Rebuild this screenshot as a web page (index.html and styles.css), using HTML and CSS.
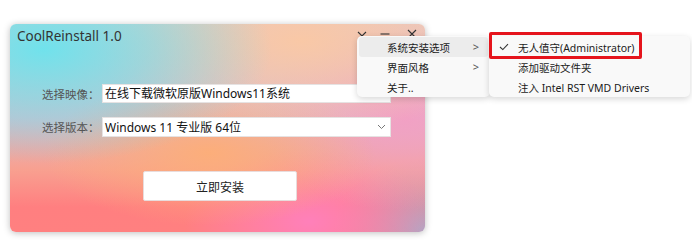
FILE: index.html
```html
<!DOCTYPE html>
<html lang="zh-CN">
<head>
  <meta charset="UTF-8">
  <title>CoolReinstall 1.0</title>
  <link rel="stylesheet" href="styles.css">
</head>
<body>
  <div class="window">
    <div class="titlebar">
      <span class="title">CoolReinstall 1.0</span>
      <div class="winbtns">
        <svg class="wb wb-menu" width="10" height="10" viewBox="0 0 10 10"><path d="M1 3 L5 7 L9 3" fill="none" stroke="#333" stroke-width="1.1"/></svg>
        <svg class="wb wb-min" width="10" height="10" viewBox="0 0 10 10"><path d="M0.5 5 H9.5" stroke="#333" stroke-width="1.1"/></svg>
        <svg class="wb wb-close" width="10" height="10" viewBox="0 0 10 10"><path d="M1 1 L9 9 M9 1 L1 9" stroke="#333" stroke-width="1.1"/></svg>
      </div>
    </div>
    <div class="form">
      <div class="row">
        <span class="label">选择映像：</span>
        <div class="field">在线下载微软原版Windows11系统</div>
      </div>
      <div class="row">
        <span class="label">选择版本：</span>
        <div class="field select">
          <span>Windows 11 专业版 64位</span>
          <svg width="9" height="6" viewBox="0 0 9 6"><path d="M1 1 L4.5 4.5 L8 1" fill="none" stroke="#777" stroke-width="1"/></svg>
        </div>
      </div>
    </div>
    <div class="actions">
      <button class="install">立即安装</button>
    </div>
  </div>

  <div class="menu menu-main">
    <div class="item active"><span>系统安装选项</span><span class="arrow">&gt;</span></div>
    <div class="item"><span>界面风格</span><span class="arrow">&gt;</span></div>
    <div class="item"><span>关于..</span></div>
  </div>

  <div class="menu menu-sub">
    <div class="item"><svg class="check" width="10" height="8" viewBox="0 0 10 8"><path d="M1 4 L3.8 6.6 L9 1.2" fill="none" stroke="#333" stroke-width="1.1"/></svg><span>无人值守(Administrator)</span></div>
    <div class="item"><span>添加驱动文件夹</span></div>
    <div class="item"><span>注入 Intel RST VMD Drivers</span></div>
  </div>

  <div class="highlight-box"></div>
</body>
</html>
```

FILE: styles.css
```css
body { margin: 0; background: #fff; font-family: "Noto Sans", "Noto Sans CJK SC", sans-serif; color: #1b1b1b; position: relative; width: 692px; height: 240px; overflow: hidden; }

.window {
  margin: 24px 0 0 10px;
  width: 415px;
  height: 208px;
  box-sizing: border-box;
  border-radius: 6px;
  box-shadow: 0 1px 7px rgba(0, 0, 0, 0.26);
  background:
    radial-gradient(ellipse 55% 55% at 8% 12%, rgba(112, 226, 236, 1) 0%, rgba(112, 226, 236, 0.6) 45%, rgba(112, 226, 236, 0) 100%),
    radial-gradient(ellipse 50% 45% at 70% 8%, rgba(249, 200, 166, 1) 0%, rgba(249, 200, 166, 0) 100%),
    radial-gradient(ellipse 40% 35% at 48% 62%, rgba(252, 174, 122, 1) 0%, rgba(252, 174, 122, 0) 100%),
    radial-gradient(ellipse 35% 45% at 95% 45%, rgba(242, 160, 196, 1) 0%, rgba(242, 160, 196, 0) 100%),
    radial-gradient(ellipse 30% 35% at 72% 95%, rgba(255, 128, 186, 1) 0%, rgba(255, 128, 186, 0) 100%),
    radial-gradient(ellipse 22% 35% at 100% 100%, rgba(176, 166, 196, 1) 0%, rgba(176, 166, 196, 0) 100%),
    linear-gradient(180deg, #e6c6c4 0%, #dcb8c8 45%, #f8a090 70%, #ff7f80 88%, #ff8080 100%);
}

.titlebar { display: flex; align-items: flex-start; justify-content: space-between; height: 24px; padding: 4px 0 0 7px; box-sizing: border-box; }
.title { font-size: 13.5px; color: #333; line-height: 16px; }
.winbtns { display: flex; align-items: center; padding: 1px 8px 0 0; }
.wb { display: block; }
.wb-min { margin-left: 13px; }
.wb-close { margin-left: 17px; }

.form { display: flex; flex-direction: column; gap: 14px; padding: 36px 0 0 32px; }
.row { display: flex; align-items: center; gap: 5px; }
.label { width: 55px; font-size: 11.5px; color: #555; white-space: nowrap; text-align: right; }
.field { width: 289px; height: 19px; box-sizing: border-box; background: #fff; border: 1px solid #e6e2e2; font-size: 12px; line-height: 17px; padding-left: 2px; white-space: nowrap; color: #111; }
.select { display: flex; align-items: center; justify-content: space-between; height: 20px; padding-right: 4px; }
.select svg { display: block; }

.actions { display: flex; padding: 34px 0 0 133px; }
.install { width: 154px; height: 30px; background: #fff; border: 1px solid #e8dcdc; border-radius: 2px; font-family: "Noto Sans CJK SC", sans-serif; font-size: 12px; color: #222; padding: 0; }

.menu { position: absolute; top: 36px; background: #f9f9f9; border-radius: 5px; box-shadow: 0 2px 6px rgba(0, 0, 0, 0.16); padding: 1px 2px; box-sizing: border-box; font-size: 10.5px; }
.menu-main { left: 357px; width: 133px; height: 61px; }
.menu-sub { left: 489px; width: 201px; height: 61px; }
.item { display: flex; align-items: center; height: 20px; padding-left: 28px; border-radius: 3px; position: relative; white-space: nowrap; }
.menu-sub .item { padding-left: 27px; }
.item.active { background: #ececec; }
.arrow { position: absolute; right: 9px; top: 2px; font-size: 11px; color: #555; }
.check { position: absolute; left: 8px; top: 6px; }

.highlight-box { position: absolute; left: 489px; top: 32px; width: 153px; height: 27px; box-sizing: border-box; border: 3px solid #e5141c; border-radius: 2px; }
```
